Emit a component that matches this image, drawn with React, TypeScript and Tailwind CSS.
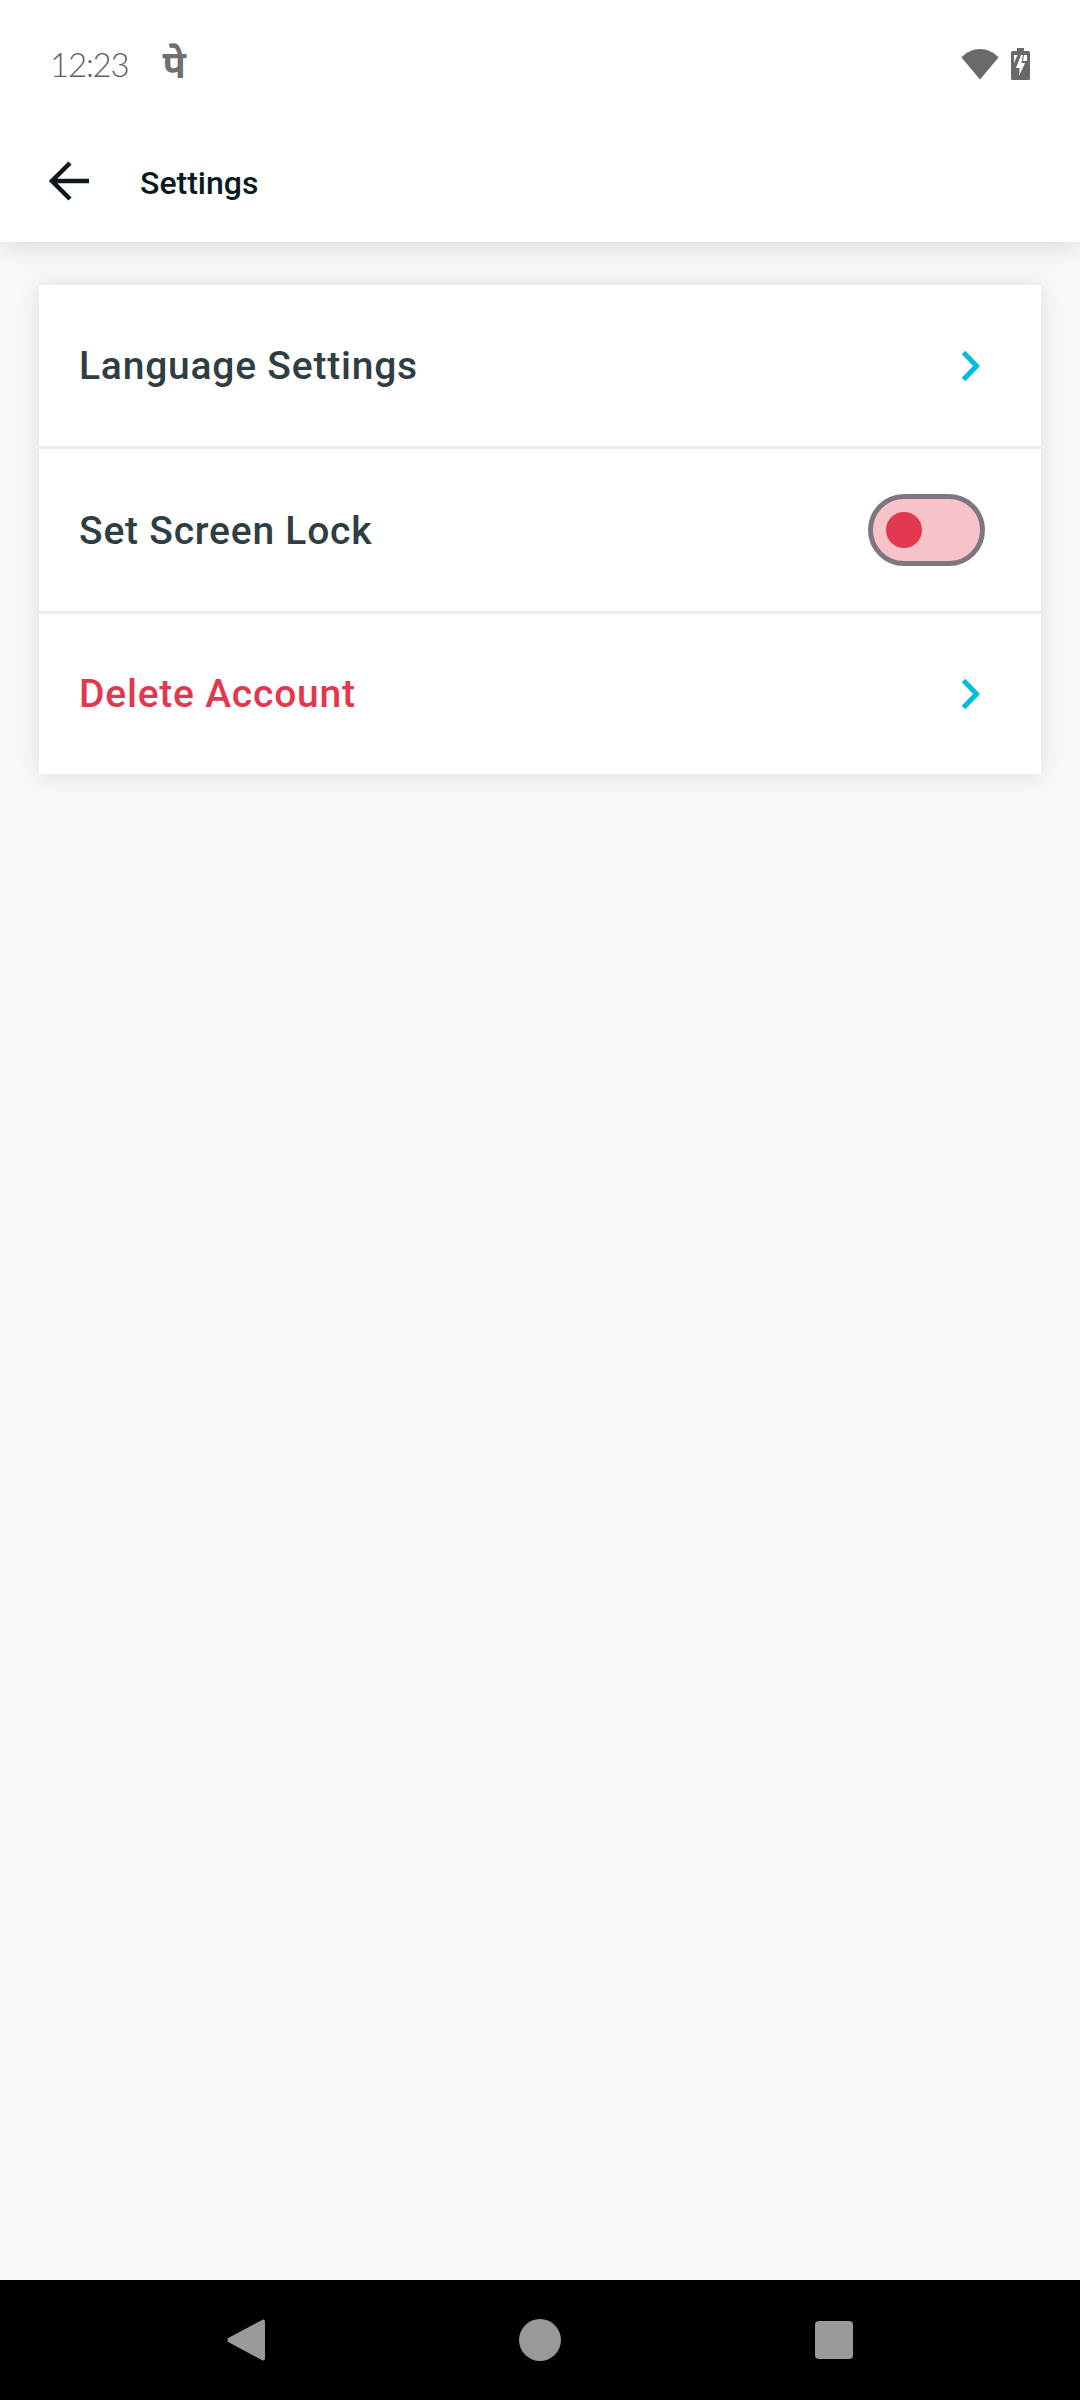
import React from "react";

function Chevron() {
  return (
    <svg width="20" height="32" viewBox="0 0 20 32" fill="none" className="shrink-0">
      <path d="M2.5 2.5 L15.5 16 L2.5 29.5" stroke="#00bcdf" strokeWidth="5" />
    </svg>
  );
}

function Row({ label, danger, right, h, textClass }: { label: string; danger?: boolean; right: React.ReactNode; h: string; textClass?: string }) {
  return (
    <div className={`flex items-center justify-between pl-[40px] pr-[60px] ${h}`}>
      <span className={`text-[39px] font-medium tracking-[0.78px] leading-[46px] ${danger ? "text-[#e2384f]" : "text-[#2f3e42]"} ${textClass ?? ""}`}>
        {label}
      </span>
      {right}
    </div>
  );
}

export default function App() {
  return (
    <div className="flex h-[2400px] w-[1080px] flex-col bg-[#f7f9f8] font-['Roboto',sans-serif]">
      <header className="z-10 h-[242px] bg-white shadow-[0_4px_24px_rgba(0,0,0,0.12)]">
        <div className="flex h-[125px] items-center justify-between pl-[50px] pr-[50px] pt-[3px]">
          <div className="flex items-center gap-[34px]">
            <span className="font-['Lato',sans-serif] text-[33px] font-light leading-[40px] tracking-[-1.2px] text-[#5f5f5f]">12:23</span>
            <span className="-mt-[2px] font-['Noto_Sans','Noto_Sans_Devanagari',sans-serif] text-[38px] font-bold leading-[40px] text-[#6f6f6f]">पे</span>
          </div>
          <div className="flex items-center gap-[12px]">
            <svg width="38" height="32" viewBox="0 0 38 32">
              <path d="M0.5 9.5 C11 -2 27 -2 37.5 9.5 L19 31.5 Z" fill="#696969" />
            </svg>
            <svg width="19" height="32" viewBox="0 0 19 32">
              <path
                fillRule="evenodd"
                d="M6 0 H13 V3 H17.5 Q19 3 19 4.5 V30.5 Q19 32 17.5 32 H1.5 Q0 32 0 30.5 V4.5 Q0 3 1.5 3 H6 Z M3 7 V15 L6.5 7 Z M16 7 H13 L12 13 H16 Z M10 7 L5 20 H8.5 V27 L14 15 H10.5 L12 7 Z"
                fill="#696969"
              />
            </svg>
          </div>
        </div>
        <div className="flex h-[117px] items-center pl-[49px] pb-[2px]">
          <svg width="40" height="40" viewBox="0 0 40 40" fill="none" className="mb-[3px]">
            <path d="M40 20 H3 M21 2 L3 20 L21 38" stroke="#0a1a1f" strokeWidth="4.5" />
          </svg>
          <span className="ml-[51px] mt-[1px] text-[32px] font-medium leading-[36px] text-[#0a1a1f]">Settings</span>
        </div>
      </header>

      <main className="flex-1 px-[39px] pt-[41px]">
        <div className="flex flex-col bg-white border-t-[2px] border-[#ececec] shadow-[0_2px_22px_rgba(0,0,0,0.1)]">
          <Row label="Language Settings" h="h-[161px]" right={<Chevron />} />
          <div className="h-[3px] bg-[#ececec]" />
          <Row
            label="Set Screen Lock"
            h="h-[162px]"
            textClass="mt-[1px]"
            right={
              <div className="-mr-[4px] flex h-[72px] w-[117px] items-center rounded-full border-[5px] border-[#7f7780] bg-[#f5c3c8] pl-[13px]">
                <div className="h-[36px] w-[36px] rounded-full bg-[#e2384f]" />
              </div>
            }
          />
          <div className="h-[3px] bg-[#ececec]" />
          <Row label="Delete Account" danger h="h-[160px]" right={<Chevron />} />
        </div>
      </main>

      <nav className="flex h-[120px] items-center justify-center gap-[254px] bg-black pr-[1px]">
        <svg width="38" height="42" viewBox="0 0 38 42">
          <path d="M36 0.6 Q38 0 38 3 V39 Q38 42 35.5 41.4 L1.2 23 Q-0.5 21 1.2 19 Z" fill="#999999" />
        </svg>
        <div className="h-[42px] w-[42px] rounded-full bg-[#999999]" />
        <div className="h-[38px] w-[38px] rounded-[4px] bg-[#999999]" />
      </nav>
    </div>
  );
}
